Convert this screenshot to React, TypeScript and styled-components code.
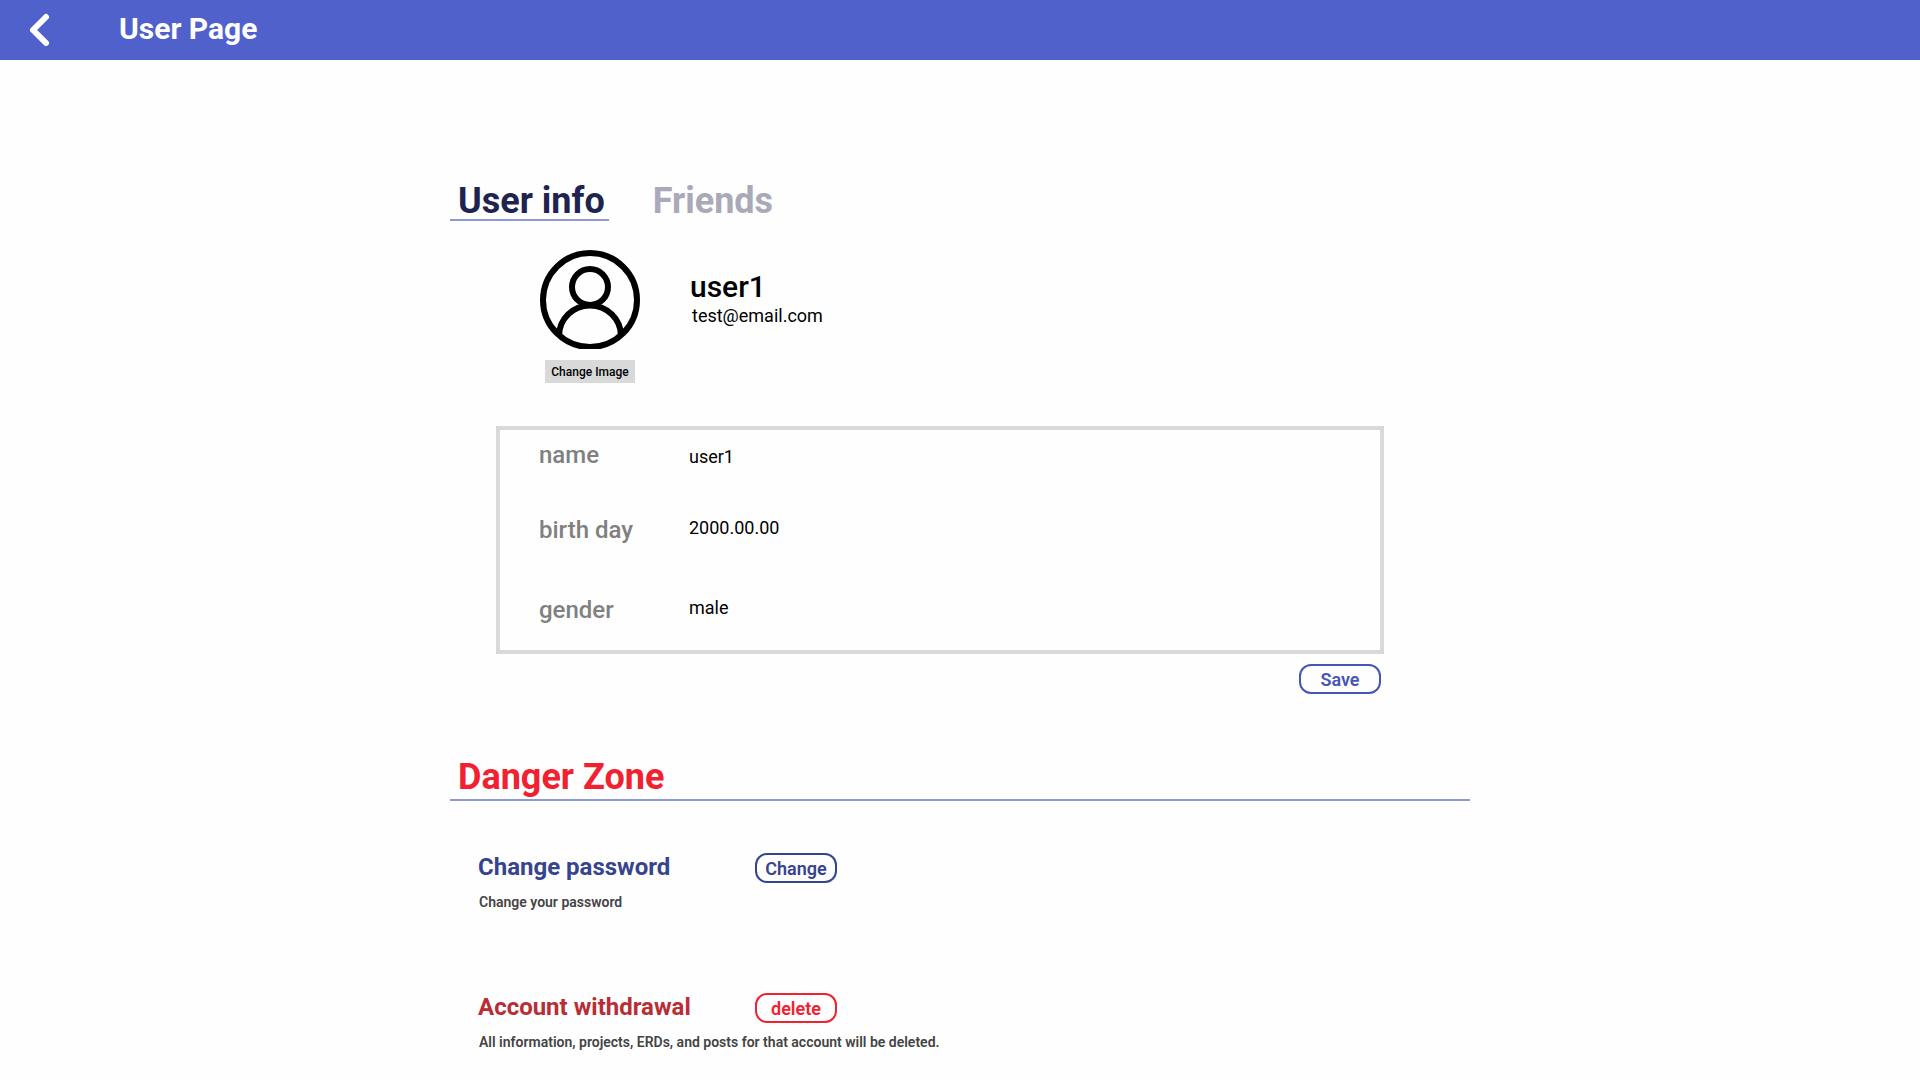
import React from "react";
import styled, { createGlobalStyle } from "styled-components";

const GlobalStyle = createGlobalStyle`
  *, *::before, *::after { box-sizing: border-box; }
  body {
    margin: 0;
    background: #fefefe;
    color: #000;
    font-family: Roboto, "Liberation Sans", sans-serif;
  }
  h1, h2, h3, p { margin: 0; }
  button, input { font-family: inherit; }
`;

const Header = styled.header`
  display: flex;
  align-items: center;
  gap: 65px;
  height: 60px;
  padding: 0 24px;
  background: #5061cc;
  color: #fff;
`;

const BackButton = styled.button`
  display: flex;
  padding: 0;
  border: 0;
  background: none;
  color: inherit;
  cursor: pointer;
`;

const PageTitle = styled.h1`
  padding-bottom: 2px;
  font-size: 30px;
  line-height: 36px;
  font-weight: 700;
`;

const Main = styled.main`
  max-width: 1020px;
  margin: 0 auto;
  padding: 121px 0 28px;
`;

const Tabs = styled.nav`
  display: flex;
  gap: 36px;
`;

const Tab = styled.a<{ $active?: boolean }>`
  padding: 2px 4px 0 8px;
  border-bottom: 2px solid ${(p) => (p.$active ? "#8e99d6" : "transparent")};
  color: ${(p) => (p.$active ? "#1e234f" : "#a9a9b8")};
  font-size: 36px;
  line-height: 36px;
  font-weight: 700;
  text-decoration: none;
`;

const Profile = styled.section`
  display: flex;
  gap: 50px;
  padding: 29px 90px 0;
`;

const AvatarColumn = styled.div`
  display: flex;
  flex-direction: column;
  align-items: center;
  gap: 11px;
`;

const ImageButton = styled.button`
  width: 90px;
  height: 23px;
  padding: 0;
  border: 0;
  background: #d9d9d9;
  color: #000;
  font-size: 12px;
  font-weight: 500;
  cursor: pointer;
`;

const Identity = styled.div`
  padding-top: 19px;
`;

const UserName = styled.h2`
  font-size: 30px;
  line-height: 36px;
  font-weight: 500;
`;

const Email = styled.p`
  padding-left: 2px;
  font-size: 18px;
  line-height: 21px;
`;

const InfoForm = styled.form`
  display: flex;
  flex-direction: column;
  align-items: flex-end;
  gap: 10px;
  padding: 43px 86px 0 46px;
`;

const InfoBox = styled.div`
  display: grid;
  grid-template-rows: 75px 80px 54px;
  width: 100%;
  padding: 11px 38px 0 39px;
  border: 4px solid #d9d9d9;
`;

const Field = styled.div<{ $align: "baseline" | "start" }>`
  display: grid;
  grid-template-columns: 150px 1fr;
  align-items: ${(p) => p.$align};
`;

const FieldLabel = styled.label`
  color: #808080;
  font-size: 24px;
  line-height: 28px;
  font-weight: 500;
`;

const FieldInput = styled.input`
  width: 100%;
  height: 22px;
  padding: 1px 0 0;
  border: 0;
  outline: 0;
  background: none;
  color: #000;
  font-size: 18px;
  line-height: 21px;
`;

const OutlineButton = styled.button<{ $color: string }>`
  width: 82px;
  height: 30px;
  padding: 1px 0 0;
  border: 2px solid currentColor;
  border-radius: 12px;
  background: none;
  color: ${(p) => p.$color};
  font-size: 18px;
  line-height: 25px;
  font-weight: 600;
  cursor: pointer;
`;

const SaveRow = styled.div`
  padding-right: 3px;
`;

const DangerTitle = styled.h2`
  margin-top: 63px;
  padding: 0 8px 2px;
  border-bottom: 2px solid #8e99d6;
  color: #f12130;
  font-size: 36px;
  line-height: 40px;
  font-weight: 700;
`;

const DangerList = styled.div`
  display: grid;
  gap: 83px;
  padding: 52px 28px 0;
`;

const DangerItem = styled.section`
  display: grid;
  grid-template-columns: 277px 1fr;
  row-gap: 11px;
`;

const ActionTitle = styled.h3<{ $color: string }>`
  color: ${(p) => p.$color};
  font-size: 24px;
  line-height: 28px;
  font-weight: 700;
`;

const ActionText = styled.p`
  grid-column: 1 / -1;
  padding-left: 1px;
  color: #444;
  font-size: 14px;
  line-height: 16px;
  font-weight: 600;
`;

const fields = [
  { id: "name", label: "name", value: "user1", align: "baseline" },
  { id: "birthday", label: "birth day", value: "2000.00.00", align: "start" },
  { id: "gender", label: "gender", value: "male", align: "start" },
] as const;

const actions = [
  {
    title: "Change password",
    text: "Change your password",
    button: "Change",
    titleColor: "#364490",
    buttonColor: "#364490",
  },
  {
    title: "Account withdrawal",
    text: "All information, projects, ERDs, and posts for that account will be deleted.",
    button: "delete",
    titleColor: "#b92e36",
    buttonColor: "#f12130",
  },
];

function ChevronLeft() {
  return (
    <svg width="30" height="36" viewBox="0 0 30 36" fill="none" aria-hidden="true">
      <path d="M22 5L9 18l13 13" stroke="#fff" strokeWidth="6" strokeLinecap="round" strokeLinejoin="round" />
    </svg>
  );
}

function Avatar() {
  return (
    <svg width="100" height="99" viewBox="0 0 100 99" fill="none" stroke="#000" strokeWidth="6" role="img" aria-label="Profile image">
      <circle cx="50" cy="50" r="47" />
      <circle cx="50" cy="37" r="18" />
      <path d="M19 86A31 30.5 0 0 1 81 86" />
    </svg>
  );
}

export default function App() {
  return (
    <>
      <GlobalStyle />
      <Header>
        <BackButton type="button" aria-label="Back">
          <ChevronLeft />
        </BackButton>
        <PageTitle>User Page</PageTitle>
      </Header>
      <Main>
        <Tabs>
          <Tab href="#info" $active aria-current="page">User info</Tab>
          <Tab href="#friends">Friends</Tab>
        </Tabs>
        <Profile>
          <AvatarColumn>
            <Avatar />
            <ImageButton type="button">Change Image</ImageButton>
          </AvatarColumn>
          <Identity>
            <UserName>user1</UserName>
            <Email>test@email.com</Email>
          </Identity>
        </Profile>
        <InfoForm onSubmit={(e) => e.preventDefault()}>
          <InfoBox>
            {fields.map((f) => (
              <Field key={f.id} $align={f.align}>
                <FieldLabel htmlFor={f.id}>{f.label}</FieldLabel>
                <FieldInput id={f.id} defaultValue={f.value} />
              </Field>
            ))}
          </InfoBox>
          <SaveRow>
            <OutlineButton type="submit" $color="#4656b8">Save</OutlineButton>
          </SaveRow>
        </InfoForm>
        <DangerTitle>Danger Zone</DangerTitle>
        <DangerList>
          {actions.map((a) => (
            <DangerItem key={a.title}>
              <ActionTitle $color={a.titleColor}>{a.title}</ActionTitle>
              <OutlineButton type="button" $color={a.buttonColor}>{a.button}</OutlineButton>
              <ActionText>{a.text}</ActionText>
            </DangerItem>
          ))}
        </DangerList>
      </Main>
    </>
  );
}
